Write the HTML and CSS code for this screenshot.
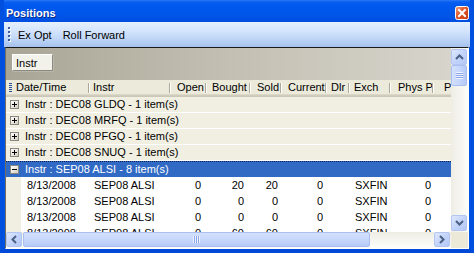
FILE: index.html
```html
<!DOCTYPE html>
<html lang="en">
<head>
    <meta charset="UTF-8">
    <title>Positions</title>
    <link rel="stylesheet" href="styles.css">
</head>
<body>
    <div class="window">
        <div class="titlebar">
            <span class="title">Positions</span>
            <span class="close-btn">
                <svg width="14" height="14" viewBox="0 0 14 14">
                    <defs>
                        <linearGradient id="red" x1="0" y1="0" x2="1" y2="1">
                            <stop offset="0" stop-color="#f0a080"/>
                            <stop offset="0.45" stop-color="#e0552a"/>
                            <stop offset="1" stop-color="#c23a10"/>
                        </linearGradient>
                    </defs>
                    <rect x="0.5" y="0.5" width="13" height="13" rx="2" fill="url(#red)" stroke="#fff"/>
                    <path d="M4 4 L10 10 M10 4 L4 10" stroke="#fff" stroke-width="2" stroke-linecap="square"/>
                </svg>
            </span>
        </div>

        <div class="toolbar">
            <span class="grip"></span>
            <span class="tool">Ex Opt</span>
            <span class="tool">Roll Forward</span>
        </div>

        <div class="grid">
            <div class="grid-main">
                <div class="groupby">
                    <span class="group-btn">Instr</span>
                </div>

                <div class="header">
                    <div class="hgrip"><span></span></div>
                    <div class="hcell c-date">Date/Time</div>
                    <div class="hcell c-instr">Instr</div>
                    <div class="hcell c-open">Open</div>
                    <div class="hcell c-bought">Bought</div>
                    <div class="hcell c-sold">Sold</div>
                    <div class="hcell c-current">Current</div>
                    <div class="hcell c-dlr">Dlr</div>
                    <div class="hcell c-exch">Exch</div>
                    <div class="hcell c-phys">Phys P</div>
                    <div class="hcell c-p">P</div>
                </div>

                <div class="rows">
                    <div class="group-row"><span class="expander plus"></span>Instr : DEC08 GLDQ - 1 item(s)</div>
                    <div class="group-row"><span class="expander plus"></span>Instr : DEC08 MRFQ - 1 item(s)</div>
                    <div class="group-row"><span class="expander plus"></span>Instr : DEC08 PFGQ - 1 item(s)</div>
                    <div class="group-row"><span class="expander plus"></span>Instr : DEC08 SNUQ - 1 item(s)</div>
                    <div class="group-row selected"><span class="expander"></span>Instr : SEP08 ALSI - 8 item(s)</div>

                    <div class="data-row">
                        <div class="indent"></div>
                        <div class="cell c-date">8/13/2008</div>
                        <div class="cell c-instr">SEP08 ALSI</div>
                        <div class="cell num c-open">0</div>
                        <div class="cell num c-bought">20</div>
                        <div class="cell num c-sold">20</div>
                        <div class="cell num c-current">0</div>
                        <div class="cell c-dlr"></div>
                        <div class="cell c-exch">SXFIN</div>
                        <div class="cell num c-phys">0</div>
                    </div>
                    <div class="data-row">
                        <div class="indent"></div>
                        <div class="cell c-date">8/13/2008</div>
                        <div class="cell c-instr">SEP08 ALSI</div>
                        <div class="cell num c-open">0</div>
                        <div class="cell num c-bought">0</div>
                        <div class="cell num c-sold">0</div>
                        <div class="cell num c-current">0</div>
                        <div class="cell c-dlr"></div>
                        <div class="cell c-exch">SXFIN</div>
                        <div class="cell num c-phys">0</div>
                    </div>
                    <div class="data-row">
                        <div class="indent"></div>
                        <div class="cell c-date">8/13/2008</div>
                        <div class="cell c-instr">SEP08 ALSI</div>
                        <div class="cell num c-open">0</div>
                        <div class="cell num c-bought">0</div>
                        <div class="cell num c-sold">0</div>
                        <div class="cell num c-current">0</div>
                        <div class="cell c-dlr"></div>
                        <div class="cell c-exch">SXFIN</div>
                        <div class="cell num c-phys">0</div>
                    </div>
                    <div class="data-row">
                        <div class="indent"></div>
                        <div class="cell c-date">8/13/2008</div>
                        <div class="cell c-instr">SEP08 ALSI</div>
                        <div class="cell num c-open">0</div>
                        <div class="cell num c-bought">60</div>
                        <div class="cell num c-sold">60</div>
                        <div class="cell num c-current">0</div>
                        <div class="cell c-dlr"></div>
                        <div class="cell c-exch">SXFIN</div>
                        <div class="cell num c-phys">0</div>
                    </div>
                </div>
            </div>

            <div class="vscroll">
                <div class="sbtn"><svg width="9" height="6" viewBox="0 0 9 6"><path d="M1 5 L4.5 1.5 L8 5" fill="none" stroke="#4d6185" stroke-width="2"/></svg></div>
                <div class="vthumb"><span class="hlines"></span></div>
                <div class="vtrack"></div>
                <div class="sbtn"><svg width="9" height="6" viewBox="0 0 9 6"><path d="M1 1 L4.5 4.5 L8 1" fill="none" stroke="#4d6185" stroke-width="2"/></svg></div>
            </div>

            <div class="hscroll">
                <div class="sbtn"><svg width="6" height="9" viewBox="0 0 6 9"><path d="M5 1 L1.5 4.5 L5 8" fill="none" stroke="#4d6185" stroke-width="2"/></svg></div>
                <div class="hthumb"><span class="vlines"></span></div>
                <div class="htrack"></div>
                <div class="sbtn"><svg width="6" height="9" viewBox="0 0 6 9"><path d="M1 1 L4.5 4.5 L1 8" fill="none" stroke="#4d6185" stroke-width="2"/></svg></div>
            </div>

            <div class="corner"></div>
        </div>
    </div>
</body>
</html>
```

FILE: styles.css
```css
body {
    margin: 0;
    padding: 0;
    font-family: "Liberation Sans", Arial, sans-serif;
    font-size: 11px;
    color: #000;
    background: #fff;
}

.window {
    width: 474px;
    height: 253px;
    box-sizing: border-box;
    display: flex;
    flex-direction: column;
    background: #0054e3;
    border-left: 4px solid #0050e0;
    border-right: 4px solid #0050e0;
    border-bottom: 4px solid #0048d8;
    overflow: hidden;
}

/* title bar */
.titlebar {
    height: 22px;
    flex-shrink: 0;
    margin: 0 -4px;
    padding: 0 5px 0 6px;
    display: flex;
    align-items: center;
    justify-content: space-between;
    background: linear-gradient(#2a7af6 0, #0a5ef0 2px, #0058ee 6px, #0055e8 16px, #004ee0 22px);
}

.title {
    color: #fff;
    font-weight: bold;
    font-size: 11px;
    padding-top: 3px;
    text-shadow: 1px 1px 0 #0a2a8a;
}

.close-btn {
    display: flex;
    margin-top: 3px;
}

/* toolbar */
.toolbar {
    height: 25px;
    flex-shrink: 0;
    display: flex;
    align-items: center;
    background: linear-gradient(#e6f0fd 0, #d6e6fc 8px, #c2d8f8 16px, #a4c1ed 25px);
}

.grip {
    width: 2px;
    height: 16px;
    margin: 0 8px 0 4px;
    background: repeating-linear-gradient(#3b5c9b 0 2px, transparent 2px 4px);
    filter: drop-shadow(1px 1px 0 #fff);
}

.tool {
    margin-right: 11px;
}

/* grid */
.grid {
    flex: 1;
    margin: 0 1px;
    border: 1px solid;
    border-color: #1a1a1a #fff #fff #716f64;
    display: grid;
    grid-template-columns: 1fr 17px;
    grid-template-rows: 1fr 16px;
    overflow: hidden;
    background: #fff;
}

.grid-main {
    overflow: hidden;
    display: flex;
    flex-direction: column;
}

.groupby {
    height: 32px;
    flex-shrink: 0;
    background: linear-gradient(to right, #a9a596, #c3bfb2 50%, #d7d4cc);
    padding: 6px 0 0 6px;
    box-sizing: border-box;
}

.group-btn {
    display: inline-block;
    width: 41px;
    height: 17px;
    box-sizing: border-box;
    padding: 2px 0 0 3px;
    background: #f3f2ea;
    border: 1px solid;
    border-color: #fff #8c8a80 #8c8a80 #fff;
    box-shadow: 1px 1px 0 #b9b6aa;
}

.header {
    height: 17px;
    flex-shrink: 0;
    display: flex;
    background: linear-gradient(#ebeadb 0, #ebeadb 14px, #e2decd 14px, #d6d2c2 15px, #cbc7b8 16px);
}

.hgrip {
    width: 8px;
    flex-shrink: 0;
    display: flex;
    align-items: center;
    justify-content: center;
}

.hgrip span {
    width: 3px;
    height: 9px;
    margin-bottom: 2px;
    background: repeating-linear-gradient(#2d4f96 0 1px, transparent 1px 2px);
}

.hcell {
    position: relative;
    flex-shrink: 0;
    box-sizing: border-box;
    line-height: 15px;
    white-space: nowrap;
}

.hcell::after {
    content: "";
    position: absolute;
    right: 0;
    top: 3px;
    height: 10px;
    width: 1px;
    background: #aca899;
    box-shadow: 1px 0 0 #fff;
}

.hcell.c-p::after {
    display: none;
}

/* column widths */
.hcell.c-date { width: 75px; padding-left: 2px; }
.c-instr { width: 81px; }
.c-open { width: 36px; }
.c-bought { width: 44px; }
.c-sold { width: 31px; }
.c-current { width: 45px; }
.c-dlr { width: 23px; }
.c-exch { width: 41px; }
.c-phys { width: 43px; }
.c-p { width: 30px; }

.hcell.c-instr { padding-left: 4px; }
.hcell.c-open { padding-left: 7px; }
.hcell.c-bought { padding-left: 6px; }
.hcell.c-sold { padding-left: 7px; }
.hcell.c-current { padding-left: 7px; }
.hcell.c-dlr { padding-left: 5px; }
.hcell.c-exch { padding-left: 5px; }
.hcell.c-phys { padding-left: 8px; }
.hcell.c-p { padding-left: 11px; }

/* rows */
.rows {
    flex: 1;
    overflow: hidden;
}

.group-row {
    height: 15px;
    line-height: 15px;
    display: flex;
    align-items: center;
    background: #f1efe2;
    border-bottom: 1px solid #fff;
    white-space: nowrap;
}

.group-row.selected {
    background: #316ac5;
    color: #fff;
    border-bottom: none;
    border-top: 1px dotted #0c2050;
}

.expander {
    position: relative;
    width: 9px;
    height: 9px;
    box-sizing: border-box;
    margin: 0 6px 0 4px;
    border: 1px solid #8a887f;
    background: linear-gradient(135deg, #fff, #e6e4da 60%, #cfccc0);
}

.expander::before {
    content: "";
    position: absolute;
    left: 1px;
    top: 3px;
    width: 5px;
    height: 1px;
    background: #000;
}

.expander.plus::after {
    content: "";
    position: absolute;
    left: 3px;
    top: 1px;
    width: 1px;
    height: 5px;
    background: #000;
}

.data-row {
    height: 16px;
    line-height: 16px;
    display: flex;
    white-space: nowrap;
}

.indent {
    width: 15px;
    flex-shrink: 0;
    background: #f1efe2;
}

.cell {
    flex-shrink: 0;
    box-sizing: border-box;
}

.cell.c-date { width: 68px; padding-left: 6px; }
.cell.c-instr { padding-left: 5px; }
.cell.c-exch { padding-left: 6px; }
.cell.num { text-align: right; }
.cell.c-open { padding-right: 5px; }
.cell.c-bought { padding-right: 6px; }
.cell.c-sold { padding-right: 3px; }
.cell.c-current { padding-right: 3px; }
.cell.c-phys { padding-right: 2px; }

/* scrollbars */
.vscroll {
    grid-row: 1;
    grid-column: 2;
    display: flex;
    flex-direction: column;
    padding: 1px 1px 1px 0;
    background: linear-gradient(to right, #eeede5, #fdfdfa);
}

.hscroll {
    grid-row: 2;
    grid-column: 1;
    display: flex;
    padding: 0 1px 1px 0;
    background: linear-gradient(#eeede5, #fdfdfa);
}

.sbtn {
    width: 16px;
    height: 16px;
    flex-shrink: 0;
    box-sizing: border-box;
    display: flex;
    align-items: center;
    justify-content: center;
    border: 1px solid #b3c6f2;
    border-radius: 2px;
    background: linear-gradient(135deg, #dfe8fd, #c3d4fb 50%, #b4c8f6);
}

.hscroll .sbtn {
    height: 15px;
}

.vthumb {
    height: 21px;
    flex-shrink: 0;
    box-sizing: border-box;
    border: 1px solid #a9bff1;
    border-radius: 2px;
    background: linear-gradient(to right, #d3e0fd, #c4d5fb 60%, #b6caf7);
    display: flex;
    align-items: center;
    justify-content: center;
}

.hlines {
    width: 7px;
    height: 7px;
    background: repeating-linear-gradient(#eef3fe 0 1px, #8aa6ec 1px 2px);
}

.vtrack,
.htrack {
    flex: 1;
}

.hthumb {
    width: 347px;
    flex-shrink: 0;
    margin-left: 1px;
    height: 15px;
    box-sizing: border-box;
    border: 1px solid #a9bff1;
    border-radius: 2px;
    background: linear-gradient(#d3e0fd, #c4d5fb 60%, #b6caf7);
    display: flex;
    align-items: center;
    justify-content: center;
}

.vlines {
    width: 7px;
    height: 7px;
    background: repeating-linear-gradient(to right, #eef3fe 0 1px, #8aa6ec 1px 2px);
}

.corner {
    grid-row: 2;
    grid-column: 2;
    background: #ece9d8;
}
```
